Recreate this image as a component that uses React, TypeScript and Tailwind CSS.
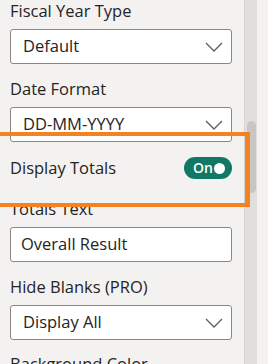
import React from "react";

type FieldProps = {
  label: string;
  value: string;
  dropdown?: boolean;
  className?: string;
};

const Chevron = () => (
  <svg width="18" height="10" viewBox="0 0 18 10" fill="none">
    <path d="M1 1L9 9L17 1" stroke="#605e5c" strokeWidth="1.3" />
  </svg>
);

const Field = ({ label, value, dropdown = true, className = "" }: FieldProps) => (
  <div className={`flex flex-col ${className}`}>
    <span className="h-[22px] leading-[22px] text-[16.5px] text-[#252423]">{label}</span>
    <div
      className={`mt-[7px] h-[35px] w-[222px] bg-white border border-[#8a8886] rounded-[3px] flex items-center justify-between pr-[8px] text-[16.5px] text-[#252423] ${
        dropdown ? "pl-[12px]" : "pl-[10px]"
      }`}
    >
      <span>{value}</span>
      {dropdown && <Chevron />}
    </div>
  </div>
);

export default function App() {
  return (
    <div className="relative w-[268px] h-[364px] overflow-hidden bg-[#f3f2f1] flex font-['Open_Sans',sans-serif]">
      {/* Format pane */}
      <div className="w-[244px] shrink-0 pl-[10px] flex flex-col">
        <Field label="Fiscal Year Type" value="Default" />
        <Field label="Date Format" value="DD-MM-YYYY" className="mt-[14px]" />

        <div className="mt-[15px] h-[22px] w-[222px] flex items-center justify-between">
          <span className="text-[16.5px] leading-[22px] text-[#252423]">Display Totals</span>
          <div className="w-[48px] h-[22px] rounded-full bg-[#117865] flex items-center justify-between pl-[9px] pr-[7px]">
            <span className="text-[14px] leading-none font-semibold text-white">On</span>
            <span className="w-[11px] h-[11px] rounded-full bg-white" />
          </div>
        </div>

        <Field label="Totals Text" value="Overall Result" dropdown={false} className="mt-[19px]" />
        <Field label="Hide Blanks (PRO)" value="Display All" className="mt-[14px]" />
        <span className="mt-[13px] h-[22px] shrink-0 leading-[22px] text-[16.5px] text-[#252423]">Background Color</span>
      </div>

      {/* Scrollbar */}
      <div className="w-[13px] shrink-0 bg-[#e1dfdd] border-l border-[#d6d4d2] flex justify-center pt-[121px]">
        <div className="w-[9px] h-[72px] rounded-full bg-[#c8c6c4]" />
      </div>

      {/* Highlight annotation */}
      <div className="absolute left-[-10px] top-[132px] w-[260px] h-[75px] border-4 border-r-[5px] border-[#f58220]" />
    </div>
  );
}
